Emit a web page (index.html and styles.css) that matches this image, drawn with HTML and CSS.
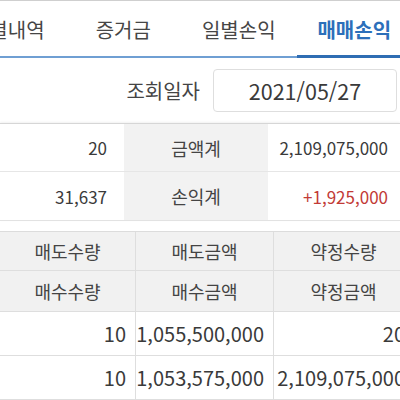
FILE: index.html
```html
<!DOCTYPE html>
<html lang="ko">
<head>
<meta charset="utf-8">
<link rel="stylesheet" href="styles.css">
</head>
<body>
<div class="screen">
  <div class="tabs">
    <div class="tab">체결내역</div>
    <div class="tab">증거금</div>
    <div class="tab">일별손익</div>
    <div class="tab active">매매손익</div>
  </div>
  <div class="query">
    <span class="query-label">조회일자</span>
    <div class="date-box">2021/05/27</div>
  </div>
  <div class="summary">
    <div class="s-val">20</div>
    <div class="s-label">금액계</div>
    <div class="s-val">2,109,075,000</div>
    <div class="s-val">31,637</div>
    <div class="s-label">손익계</div>
    <div class="s-val red">+1,925,000</div>
  </div>
  <div class="grid">
    <div class="h">매도수량</div>
    <div class="h">매도금액</div>
    <div class="h">약정수량</div>
    <div class="h h2">매수수량</div>
    <div class="h h2">매수금액</div>
    <div class="h h2">약정금액</div>
    <div class="d">10</div>
    <div class="d">1,055,500,000</div>
    <div class="d">20</div>
    <div class="d">10</div>
    <div class="d">1,053,575,000</div>
    <div class="d">2,109,075,000</div>
  </div>
</div>
</body>
</html>
```

FILE: styles.css
```css
html, body {
  margin: 0;
  padding: 0;
  overflow: hidden;
  background: #fff;
}
.screen {
  width: 400px;
  height: 400px;
  overflow: hidden;
  font-family: "Noto Sans CJK KR", "Noto Sans", sans-serif;
  color: #3a3a3a;
}
.tabs {
  display: flex;
  height: 55px;
  border-top: 1px solid #cfcfcf;
  border-bottom: 2px solid #6f9fd3;
  margin-left: -50px;
}
.tab {
  flex: 0 0 115.5px;
  display: flex;
  align-items: center;
  justify-content: center;
  font-size: 20px;
  color: #464646;
  position: relative;
  padding-top: 1px;
}
.tab.active {
  color: #2c6fba;
  font-weight: 700;
}
.tab.active::after {
  content: "";
  position: absolute;
  left: 0;
  right: -20px;
  bottom: -2px;
  height: 3px;
  background: #2f6db3;
}
.query {
  height: 65px;
  display: flex;
  align-items: center;
  justify-content: flex-end;
  gap: 13px;
  padding-right: 3px;
}
.query-label {
  font-size: 20px;
  color: #444;
}
.date-box {
  width: 182px;
  height: 41px;
  border: 1px solid #dedede;
  border-radius: 4px;
  display: flex;
  align-items: center;
  justify-content: center;
  font-size: 21.5px;
  color: #3a3a3a;
}
.summary {
  display: grid;
  grid-template-columns: 124px 144px 132px;
  grid-auto-rows: 48px;
  border-top: 1px solid #d6d6d6;
  box-shadow: 0 -1px 2px rgba(0,0,0,0.06);
  border-bottom: 1px solid #e2e2e2;
}
.summary > div {
  display: flex;
  align-items: center;
  font-size: 17px;
}
.summary > div:nth-child(-n+3) {
  border-bottom: 1px solid #e6e6e6;
}
.s-val {
  justify-content: flex-end;
  padding-right: 17px;
}
.summary .s-val:nth-child(3n) {
  padding-right: 12px;
}
.s-label {
  background: #f2f2f2;
  justify-content: center;
  color: #444;
  font-size: 18px !important;
}
.red {
  color: #c23a36;
}
.grid {
  margin-top: 10px;
  display: grid;
  grid-template-columns: 136px 138px 140px;
  border-top: 1px solid #dcdcdc;
}
.grid > div {
  display: flex;
  align-items: center;
  border-right: 1px solid #dedede;
  border-bottom: 1px solid #dedede;
  white-space: nowrap;
}
.h {
  background: #f1f1f1;
  height: 38px;
  justify-content: center;
  font-size: 18px;
  color: #444;
}
.h2 {
  height: 40px;
}
.d {
  height: 43px;
  justify-content: flex-end;
  padding-right: 9px;
  font-size: 20px;
  color: #3a3a3a;
}
.grid .d:nth-child(3n) {
  padding-right: 8px;
}
```
